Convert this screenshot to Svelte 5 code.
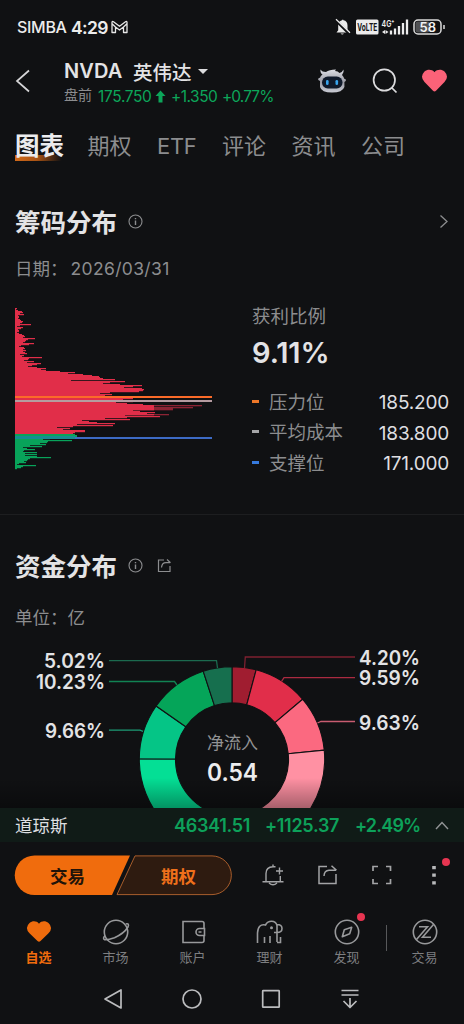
<script>
  const tabs = ['图表', '期权', 'ETF', '评论', '资讯', '公司'];

  const rows = [
    2, 1, 3, 7, 8, 5, 9, 3, 4, 4, 3, 5, 6, 8, 7, 5, 16, 5, 2, 8, 6, 3, 4, 4, 2, 4, 7, 9, 10, 8,
    20, 13, 11, 10, 8, 19, 14, 6, 4, 9, 10, 8, 11, 8, 10, 12, 5, 9, 7, 27, 14, 13, 9, 19, 12, 26, 22, 17, 13, 22,
    31, 26, 31, 45, 60, 53, 68, 77, 84, 85, 88, 100, 56, 110, 95, 88, 105, 127, 118, 109, 127, 129, 128, 124, 95, 85, 97, 90, 92, 102,
    118, 108, 112, 118, 101, 112, 128, 187, 139, 178, 158, 158, 118, 125, 140, 132, 154, 110, 145, 112, 90, 115, 67, 74, 82, 100, 62, 98, 58, 42,
    55, 48, 70, 70, 60, 58, 60, 62, 62, 52, 35, 28, 57, 33, 32, 25, 31, 15, 27, 8, 12, 20, 9, 8, 22, 10,
    22, 10, 22, 36, 15, 13, 12, 9, 11, 4, 2, 21, 8, 6, 2
  ];
  const firstGreen = 126;

  const levels = [
    { name: '压力位', value: '185.200', color: '#ed7728' },
    { name: '平均成本', value: '183.800', color: '#a5a6a8' },
    { name: '支撑位', value: '171.000', color: '#367ade' }
  ];

  const cx = 232, cy = 119.3, R = 92.7, r = 56.5;
  const slices = [
    [0, 15.1, '#a01d30'], [15.1, 49.6, '#e12e4a'], [49.6, 84.3, '#fb6980'], [84.3, 178, '#ff91a3'],
    [178, 270.3, '#04df95'], [270.3, 305.1, '#05c586'], [305.1, 341.9, '#05a559'], [341.9, 360, '#166f4e']
  ];
  const pt = (deg, rad) => {
    const t = (deg * Math.PI) / 180;
    return `${(cx + rad * Math.sin(t)).toFixed(2)} ${(cy - rad * Math.cos(t)).toFixed(2)}`;
  };
  const arc = (a, b) => `M${pt(a, R)}A${R} ${R} 0 0 1 ${pt(b, R)}L${pt(b, r)}A${r} ${r} 0 0 0 ${pt(a, r)}Z`;

  const callouts = [
    { t: '5.02%', x: 44, y: 28, w: 61, c: '#1b6a4e', d: 'M109 20.7H216.5L217.5 28' },
    { t: '10.23%', x: 36, y: 49, w: 69, c: '#118353', d: 'M109 41.5H174.5L177 45' },
    { t: '9.66%', x: 45, y: 98, w: 60, c: '#1c9b76', d: 'M109 90.2H140L143 91.3' },
    { t: '4.20%', x: 359, y: 24.5, w: 61, c: '#7d2030', d: 'M355 17H245.3L244.5 28' },
    { t: '9.59%', x: 359, y: 45, w: 61, c: '#ab2b41', d: 'M355 37.7H284L281.5 41.5' },
    { t: '9.63%', x: 359, y: 89.5, w: 61, c: '#c85c70', d: 'M355 81.5H321L317.5 83' }
  ];
</script>

{#snippet info()}
  <svg class="info" width="15" height="15" viewBox="0 0 15 15" fill="none" stroke="#8c8d8f" stroke-width="1.1">
    <circle cx="7.5" cy="7.5" r="6.5" /><path d="M7.5 6.6v4.4M7.5 4v1.3" stroke-width="1.4" />
  </svg>
{/snippet}

<div class="phone">
  <div class="status">
    <span class="carrier">SIMBA</span><span class="clock">4:29</span>
    <svg width="17" height="14" viewBox="0 0 17 14" fill="none" stroke="#e8e8e8" stroke-width="1.3" stroke-linejoin="round">
      <path d="M1 12.500V2.500Q1 .8 2.500 1.700L8.500 6.300l6-4.600Q16 .8 16 2.500v10h-3.500V7l-4 3-4-3v5.500zM4.500 7 1.300 4M12.500 7l3.200-3" />
    </svg>
    <svg class="status-icons" width="110" height="20" viewBox="0 0 110 20">
      <path d="M1.500 15.500h12.500l-1.500-2V8.500q0-4.500-4-5.200Q8 1.500 7 3.300 3.200 4.200 3.200 8.500v4.800zM5.500 16.500h3.500q-1.700 2-3.500 0" fill="#ececec" />
      <path d="m1 3.500 13.500 13.500" stroke="#101113" stroke-width="2.600" /><path d="M1 2.200 15 15.700" stroke="#ececec" stroke-width="1.200" />
      <rect x="21" y="2.500" width="22.500" height="15" rx="1.500" fill="#ececec" />
      <text x="22.300" y="14.200" textLength="20" lengthAdjust="spacingAndGlyphs" font-size="11" font-weight="700" fill="#151618">VoLTE</text>
      <text x="46.500" y="9.600" textLength="13" lengthAdjust="spacingAndGlyphs" font-size="9.500" font-weight="600" fill="#ececec">4G⁺</text>
      <path d="m47 15 3-2v4zm6.500 0-3-2v4z" fill="#ececec" />
      <path d="M56 17.500v-4M60 17.500v-6M64 17.500V9M68 17.500V6M72 17.500V2.500" stroke="#ececec" stroke-width="2.300" />
      <rect x="79" y="3" width="27" height="14" rx="4" fill="#101113" stroke="#dcdcdc" stroke-width="1.500" />
      <rect x="80.500" y="4.500" width="14" height="11" rx="2" fill="#505153" />
      <path d="M109 8v4" stroke="#dcdcdc" stroke-width="1.500" />
      <text x="84.500" y="14.600" textLength="16.500" lengthAdjust="spacingAndGlyphs" font-size="13" font-weight="600" fill="#f3f3f3">58</text>
    </svg>
  </div>

  <header>
    <svg class="back" width="16" height="24" viewBox="0 0 16 24" fill="none" stroke="#d5d5d7" stroke-width="1.700"><path d="M14 1.500 2 12l12 10.500" /></svg>
    <div class="names">
      <div class="symbol"><b>NVDA</b><span>英伟达</span><i></i></div>
      <div class="quote">
        <em>盘前</em><span class="last">175.750</span>
        <svg width="11" height="13" viewBox="0 0 11 13"><path d="M5.500.5 10.500 6H7.500v6.500h-4V6H.5z" fill="#0ca65a" /></svg>
        <span class="chg">+1.350</span><span class="pct">+0.77%</span>
      </div>
    </div>
    <svg class="bot" width="30" height="27" viewBox="0 0 30 27">
      <defs><linearGradient id="shell" x2="0" y2="1"><stop stop-color="#dedfe6" /><stop offset=".55" stop-color="#9a9ba5" /><stop offset="1" stop-color="#c9cbd3" /></linearGradient></defs>
      <path d="M5.500 6.500Q3 5 3.500 1.500 5 4 9 4q3-2.500 10-2.500L18 3q3 0 4.500 2 3-1 4-3.500.800 3-1.500 5.500 2 2 2.200 3.700 2.300.3 1.500 2.300l-1.300 1V19Q25.500 24.500 15 24.500T3 19v-6l-1.700-1Q.700 10 3 9.800q.5-2 2.500-3.300" fill="url(#shell)" />
      <rect x="5" y="8.500" width="20.500" height="12" rx="5.800" fill="#101a2b" />
      <rect x="9" y="12" width="2.600" height="5" rx="1.300" fill="#38a5ee" /><rect x="18.500" y="12" width="2.600" height="5" rx="1.300" fill="#38a5ee" />
    </svg>
    <svg class="search" width="26" height="26" viewBox="0 0 26 26" fill="none" stroke="#dcdcde" stroke-width="1.700"><circle cx="12.300" cy="12" r="10.700" /><path d="m19.500 19.500 5 5" /></svg>
    <svg class="fav" width="27" height="24" viewBox="0 0 27 24"><path d="M13.500 3.200C16 .2 20.500 0 23.500 2.500q5 5.200 0 10.600L15 21.800q-1.500 1.400-3 0L3.500 13.100q-5-5.400 0-10.600C6.500 0 11 .2 13.500 3.200" fill="#fb6278" /></svg>
  </header>

  <nav class="tabs">
    {#each tabs as tab, i}<span class:active={i === 0}>{tab}</span>{/each}
  </nav>

  <main>
    <section class="chips">
      <div class="title"><h2>筹码分布</h2>{@render info()}
        <svg class="more" width="10" height="15" viewBox="0 0 10 15" fill="none" stroke="#8c8d8f" stroke-width="1.300"><path d="m1.500 1.500 6.500 6-6.500 6" /></svg>
      </div>
      <div class="note">日期：<span>2026/03/31</span></div>
      <div class="chip-body">
        <svg width="198" height="163" viewBox="0 0 198 163">
          {#each rows as w, i}
            {#if i > 94 && i < 110 && w > 145}
              <rect y={i} width={w} height="1.300" fill="#8c2434" /><rect y={i} width="139" height="1.300" fill="#e12e49" />
            {:else}
              <rect y={i} width={w} height="1.200" fill={i >= firstGreen ? '#08a35a' : '#e12e49'} />
            {/if}
          {/each}
          <rect y="88" width="197" height="2" fill="#fb6b29" />
          <rect y="92" width="197" height="2" fill="#b59ba0" />
          <rect y="129" width="197" height="2" fill="#3d6bc5" />
          <rect y="128" width="60" height="3" fill="#168d91" />
        </svg>
        <div class="stats">
          <div class="label">获利比例</div>
          <div class="ratio">9.11%</div>
          {#each levels as l}
            <div class="level"><i style:background={l.color}></i><span>{l.name}</span><b>{l.value}</b></div>
          {/each}
        </div>
      </div>
    </section>

    <section class="funds">
      <div class="title"><h2>资金分布</h2>{@render info()}
        <svg class="share" width="15" height="15" viewBox="0 0 15 15" fill="none" stroke="#8c8d8f" stroke-width="1.200"><path d="M7 2H1.500v11.500H13V8M4.500 9.500Q5 4.700 9 4.700h4M10 1.500l3.500 3.200" /></svg>
      </div>
      <div class="note">单位：<em>亿</em></div>
      <svg class="donut" width="464" height="220" viewBox="0 0 464 220">
        {#each slices as [a, b, c]}<path d={arc(a, b)} fill={c} stroke="#101113" stroke-width="1.100" />{/each}
        {#each callouts as c}
          <path d={c.d} fill="none" stroke={c.c} stroke-width="1.300" />
          <text x={c.x} y={c.y} textLength={c.w} lengthAdjust="spacingAndGlyphs" class="pc">{c.t}</text>
        {/each}
        <text x="207" y="109" textLength="51" class="net">净流入</text>
        <text x="207" y="141" textLength="51" lengthAdjust="spacingAndGlyphs" class="net-value">0.54</text>
      </svg>
    </section>
    <div class="fade"></div>
  </main>

  <div class="index">
    <span class="idx">道琼斯</span><b class="v1">46341.51</b><b class="v2">+1125.37</b><b class="v3">+2.49%</b>
    <svg width="14" height="9" viewBox="0 0 14 9" fill="none" stroke="#929496" stroke-width="1.400"><path d="m1 8 6-6.500L13 8" /></svg>
  </div>

  <div class="actions">
    <svg width="218" height="41" viewBox="0 0 218 41">
      <path d="M20.500 .5h95.500L98 40H20.500A19.750 19.750 0 0 1 20.500 .5" fill="#f06c0d" />
      <path d="M121 .9h77A19.300 19.300 0 0 1 198 39.600h-95z" fill="#2e1b10" stroke="#b8652f" stroke-width=".9" />
      <text x="36" y="27.500" textLength="35" fill="#211309">交易</text>
      <text x="147" y="27.500" textLength="35" fill="#ef701b">期权</text>
    </svg>
    <div class="tools">
      <svg width="22" height="22" viewBox="0 0 22 22" fill="none" stroke="#a3a4a6" stroke-width="1.400"><path d="M.5 17.800h21M4 17.500V9.500Q4 3 11 2.700h2.500M18.300 12v5.500M11 .5v2.500M17.500 3.500v7M14 7h7M7 19q4 3.500 8 0" /></svg>
      <svg width="20" height="20" viewBox="0 0 20 20" fill="none" stroke="#a3a4a6" stroke-width="1.500"><path d="M9 1.500H1v17h17V9M6 11Q6.300 5.500 11 5.300h7M13.500.8l5 4.500" /></svg>
      <svg width="20" height="20" viewBox="0 0 20 20" fill="none" stroke="#a3a4a6" stroke-width="1.700"><path d="M1 6V1.500h5M14 1.500h4.500V6M18.500 14v4.500H14M6 18.500H1V14" /></svg>
      <span class="badged"><svg width="4" height="20" viewBox="0 0 4 20" fill="#b8b9bb"><path d="M.2 1h3.600v3.200H.2zM.2 8.600h3.600v3.200H.2zM.2 16.200h3.600v3.200H.2z" /></svg><i class="dot"></i></span>
    </div>
  </div>

  <nav class="bottom">
    <div class="item on">
      <svg width="28" height="28" viewBox="0 0 28 28"><path d="M14 5.800c2.400-3 6.500-3.200 9.500-.8q5.200 4.900 0 10.200l-8 7.800q-1.500 1.400-3 0l-8-7.800Q-.700 9.900 4.500 5C7.500 2.600 11.600 2.800 14 5.800" fill="#f06c0d" /></svg>
      <span>自选</span>
    </div>
    <div class="item">
      <svg width="28" height="28" viewBox="0 0 28 28"><circle cx="14" cy="14" r="11.700" /><path d="M3 17.500Q.3 20.700 2.700 21.700 6 22 12.500 19.700 22 15.500 26 9 27.700 5 23.700 6" /></svg>
      <span>市场</span>
    </div>
    <div class="item">
      <svg width="28" height="28" viewBox="0 0 28 28"><path d="M25 10V5.500q0-2-2-2H4v21H23q2 0 2-2V18M25.500 10.500h-5a3.500 3.500 0 0 0 0 7h5zM19.500 14h3" /></svg>
      <span>账户</span>
    </div>
    <div class="item">
      <svg width="28" height="28" viewBox="0 0 28 28"><path d="M1.500 25V15Q2 5.500 9.500 7 11.500 3.300 15.500 3.300q4.500 0 5.500 4.200V24M8.500 19v6M14 18v7M21 6.500q5 0 5 4T21 14.500h-3M21 24.500h3.500v-5.500" /><circle cx="15.500" cy="9.800" r="1.500" fill="#98999b" stroke="none" /></svg>
      <span>理财</span>
    </div>
    <div class="item">
      <svg width="28" height="28" viewBox="0 0 28 28"><circle cx="14" cy="14" r="11.700" /><path d="m9.300 18.700 2-7 7.400-2.400-2 6.500z" stroke-linejoin="round" /></svg>
      <span>发现</span><i class="dot"></i>
    </div>
    <div class="sep"></div>
    <div class="item last-item">
      <svg width="28" height="28" viewBox="0 0 28 28"><circle cx="14" cy="14" r="11.700" /><path d="M8 8.800H16.500L5.500 21.500M22.500 6.500 11.500 19.200h8.500" /></svg>
      <span>交易</span>
    </div>
  </nav>

  <div class="system">
    <svg width="24" height="24" viewBox="0 0 24 24"><path d="M20 3v18L4 12z" /></svg>
    <svg width="24" height="24" viewBox="0 0 24 24"><circle cx="12" cy="12" r="9" /></svg>
    <svg width="24" height="24" viewBox="0 0 24 24"><rect x="3.700" y="3.700" width="16.500" height="16.500" rx=".5" /></svg>
    <svg width="24" height="24" viewBox="0 0 24 24"><path d="M3.500 3.500h17M3.500 8h17M12 11v9M5.500 14l6.500 6.500 6.500-6.500" /></svg>
  </div>
</div>

<style>
  :global(body) { background: #101113; }
  .phone {
    width: 464px; height: 1024px; display: flex; flex-direction: column; overflow: hidden;
    background: #101113; color: #e3e3e5; font-family: Inter, "Noto Sans CJK SC", sans-serif;
  }
  svg { flex: none; display: block; }
  i, em { font-style: normal; }
  b, h2 { font-weight: 600; margin: 0; }

  .status { height: 50px; display: flex; align-items: center; padding: 4px 19px 0 17px; box-sizing: border-box; color: #ececec; }
  .carrier { font-size: 16px; font-weight: 500; letter-spacing: -.3px; width: 54px; white-space: nowrap; }
  .clock { font-size: 17.500px; font-weight: 600; width: 40px; letter-spacing: -.6px; white-space: nowrap; }
  .status-icons { margin-left: auto; }

  header { height: 66px; display: flex; align-items: center; box-sizing: border-box; padding: 0 16px 4px 15px; }
  .names { width: 255px; margin-left: 33px; padding-top: 3px; }
  .symbol { display: flex; align-items: center; height: 27px; font-size: 20px; white-space: nowrap; }
  .symbol b { width: 69px; letter-spacing: .1px; }
  .symbol span { font-size: 19.500px; font-weight: 500; }
  .symbol i { border: 5px solid transparent; border-top-color: #dcdcde; border-bottom: 0; margin-left: 6px; }
  .quote { display: flex; align-items: center; height: 23px; font-size: 15.500px; color: #0ca65a; white-space: nowrap; }
  .quote em { font-size: 14px; line-height: 18px; margin-top: -2px; color: #8c8d8f; width: 34px; }
  .last { width: 57px; letter-spacing: -.35px; }
  .chg { width: 51px; margin-left: 5px; letter-spacing: -.5px; }
  .pct { letter-spacing: -.9px; }
  .bot { margin-left: -1px; }
  .search { margin-left: 25px; }
  .fav { margin-left: 23px; }

  .tabs { height: 60px; display: flex; align-items: center; gap: 25.500px; padding: 1px 15px 0; box-sizing: border-box; font-size: 22px; color: #8c8d8f; white-space: nowrap; }
  .tabs span { line-height: 33px; margin-top: -1px; }
  .tabs span:nth-child(3) { letter-spacing: -.3px; }
  .tabs span.active {
    font-size: 24.500px; font-weight: 600; color: #ececee; margin: 0 -2px 0 0;
    background: linear-gradient(100deg, #d36b1b, #a95314 45%, transparent 95%) 0 25px / 49px 6px no-repeat;
  }

  main { flex: 1; min-height: 0; position: relative; overflow: hidden; }
  .title { display: flex; align-items: center; height: 40px; padding: 0 15px; }
  h2 { font-size: 25.500px; line-height: 36px; margin-top: 1px; }
  .info { margin-left: 10.500px; margin-top: -1px; }
  .more { margin-left: auto; margin-top: -2px; }
  .share { margin-left: 14px; margin-top: -2px; }
  .note { font-size: 17.500px; line-height: 26px; color: #8c8d8f; padding-left: 15px; display: flex; }
  .note span { margin-left: 3px; letter-spacing: .35px; }
  .chips { height: 339px; box-sizing: border-box; padding-top: 26px; border-bottom: 1px solid #1d1e20; }
  .chips .note { margin-top: 14px; }
  .chip-body { display: flex; padding: 26px 15px 0; }
  .stats { flex: 1; margin-left: 39px; margin-top: -5px; }
  .label { font-size: 18.500px; line-height: 26px; color: #8c8d8f; }
  .ratio { font-size: 29px; font-weight: 600; line-height: 40px; letter-spacing: -.1px; margin: 4px 0 13px; }
  .level { display: flex; align-items: center; height: 30.500px; font-size: 18.500px; color: #8c8d8f; }
  .level i { width: 7px; height: 3px; margin-right: 10px; }
  .level span { margin-top: -1px; }
  .level b { font-weight: 400; margin-left: auto; font-size: 19px; color: #dfdfe1; letter-spacing: -.2px; margin-top: 3px; }

  .funds { padding-top: 31px; }
  .funds .note { margin-top: 19px; }
  .funds .note em { margin-left: 0; }
  .donut { margin-top: 9px; }
  .pc { font-size: 20px; font-weight: 600; fill: #e3e3e5; }
  .net { font-size: 17px; fill: #929395; }
  .net-value { font-size: 24px; font-weight: 600; fill: #ececee; }
  .fade { position: absolute; left: 0; right: 0; bottom: 0; height: 30px; background: linear-gradient(transparent, rgba(0, 0, 0, .34)); }

  .index { height: 34px; display: flex; align-items: center; padding: 1px 15px 0; box-sizing: border-box; background: #101b17; font-size: 18px; color: #0da15a; white-space: nowrap; }
  .index b { letter-spacing: -.3px; }
  .index .idx { font-size: 17.500px; color: #dedfe0; width: 159px; margin-top: -2px; }
  .v1 { width: 91px; } .v2 { width: 90px; }
  .index .v3 { width: 80px; letter-spacing: -.8px; }

  .actions { height: 66px; display: flex; align-items: center; padding-left: 14px; }
  .actions text { font-size: 17.500px; font-weight: 600; }
  .tools { flex: 1; display: flex; align-items: center; margin-left: 30px; }
  .tools svg + svg { margin-left: 34px; }
  .badged { position: relative; margin-left: 40px; }
  .badged .dot { left: 10px; top: -7px; }
  .dot { position: absolute; width: 8px; height: 8px; border-radius: 50%; background: #e73551; }

  .bottom { height: 66px; display: flex; align-items: center; color: #7d7e80; font-size: 13px; box-sizing: border-box; padding-top: 3px; }
  .item { width: 77px; display: flex; flex-direction: column; align-items: center; position: relative; line-height: 20px; gap: 1px; }
  .item svg { fill: none; stroke: #98999b; stroke-width: 1.600; }
  .item.on svg { stroke: none; }
  .on { color: #f06c0d; font-weight: 600; }
  .item .dot { left: 49px; top: -5px; }
  .sep { width: 1px; height: 26px; background: #57585a; margin-top: -10px; margin-left: 1px; }
  .last-item { margin-left: -1px; }

  .system { height: 50px; display: flex; align-items: center; gap: 55px; padding-left: 101px; }
  .system svg { fill: none; stroke: #bbbcbe; stroke-width: 1.700; stroke-linejoin: round; }
</style>
